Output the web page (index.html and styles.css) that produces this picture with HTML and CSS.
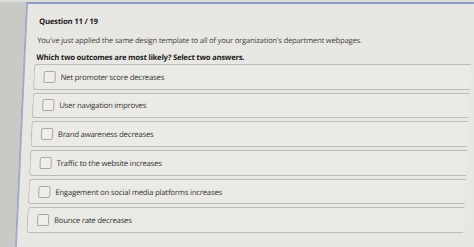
FILE: index.html
```html
<!DOCTYPE html>
<html lang="en">
<head>
    <meta charset="UTF-8">
    <meta name="viewport" content="width=device-width, initial-scale=1.0">
    <title>Question 11 / 19</title>
    <link rel="stylesheet" href="styles.css">
</head>
<body>
    <div class="screen">
        <div class="card">
            <h2 class="q-number">Question 11 / 19</h2>
            <p class="q-text">You've just applied the same design template to all of your organization's department webpages.</p>
            <p class="q-prompt">Which two outcomes are most likely? Select two answers.</p>

            <div class="options">
                <label class="option"><span class="box"></span>Net promoter score decreases</label>
                <label class="option"><span class="box"></span>User navigation improves</label>
                <label class="option"><span class="box"></span>Brand awareness decreases</label>
                <label class="option"><span class="box"></span>Traffic to the website increases</label>
                <label class="option"><span class="box"></span>Engagement on social media platforms increases</label>
                <label class="option"><span class="box"></span>Bounce rate decreases</label>
            </div>
        </div>
    </div>
</body>
</html>
```

FILE: styles.css
```css
html, body {
    margin: 0;
    padding: 0;
    height: 100%;
    overflow: hidden;
}

body {
    font-family: "Open Sans", "Liberation Sans", sans-serif;
    background-color: #e8e7e3;
}

/* grey bezel on the left and top, card colour behind the slanted right side */
.screen {
    height: 100%;
    padding: 2px 0 0 26px;
    background:
        linear-gradient(to bottom, #dcdcd8 0, #dcdcd8 2px, transparent 2px),
        linear-gradient(to right, #c9c9c5 0, #c9c9c5 28px, #e8e7e3 28px);
    box-sizing: border-box;
}

.card {
    height: 100%;
    background-color: #e8e7e3;
    border-top: 2px solid #8e9bc2;
    border-left: 2px solid #a1a9c6;
    padding: 11px 0 0 0;
    box-sizing: border-box;
    transform: skewX(-2.6deg);
    transform-origin: 0 0;
}

.q-number {
    margin: 0 0 0 12px;
    font-size: 7.6px;
    letter-spacing: -0.15px;
    line-height: 12px;
    font-weight: 700;
    color: #1b1b1b;
}

.q-text {
    margin: 7px 0 0 11px;
    font-size: 7.6px;
    letter-spacing: -0.18px;
    line-height: 12px;
    color: #444;
}

.q-prompt {
    margin: 5px 0 0 11px;
    font-size: 7.6px;
    letter-spacing: -0.18px;
    line-height: 12px;
    font-weight: 700;
    color: #1b1b1b;
}

.options {
    display: flex;
    flex-direction: column;
    gap: 3.2px;
    margin: 1px 0 0 9px;
}

.option {
    display: flex;
    align-items: center;
    height: 25.5px;
    box-sizing: border-box;
    border: 1px solid #bdbcb8;
    border-right: none;
    border-radius: 3px 0 0 3px;
    background-color: #ebeae6;
    padding-left: 9px;
    font-size: 7.7px;
    letter-spacing: -0.18px;
    color: #333;
}

.box {
    width: 12px;
    height: 12px;
    box-sizing: border-box;
    border: 1px solid #a9a8a4;
    border-radius: 2px;
    background-color: #efeeea;
    margin-right: 5px;
    flex-shrink: 0;
}
```
